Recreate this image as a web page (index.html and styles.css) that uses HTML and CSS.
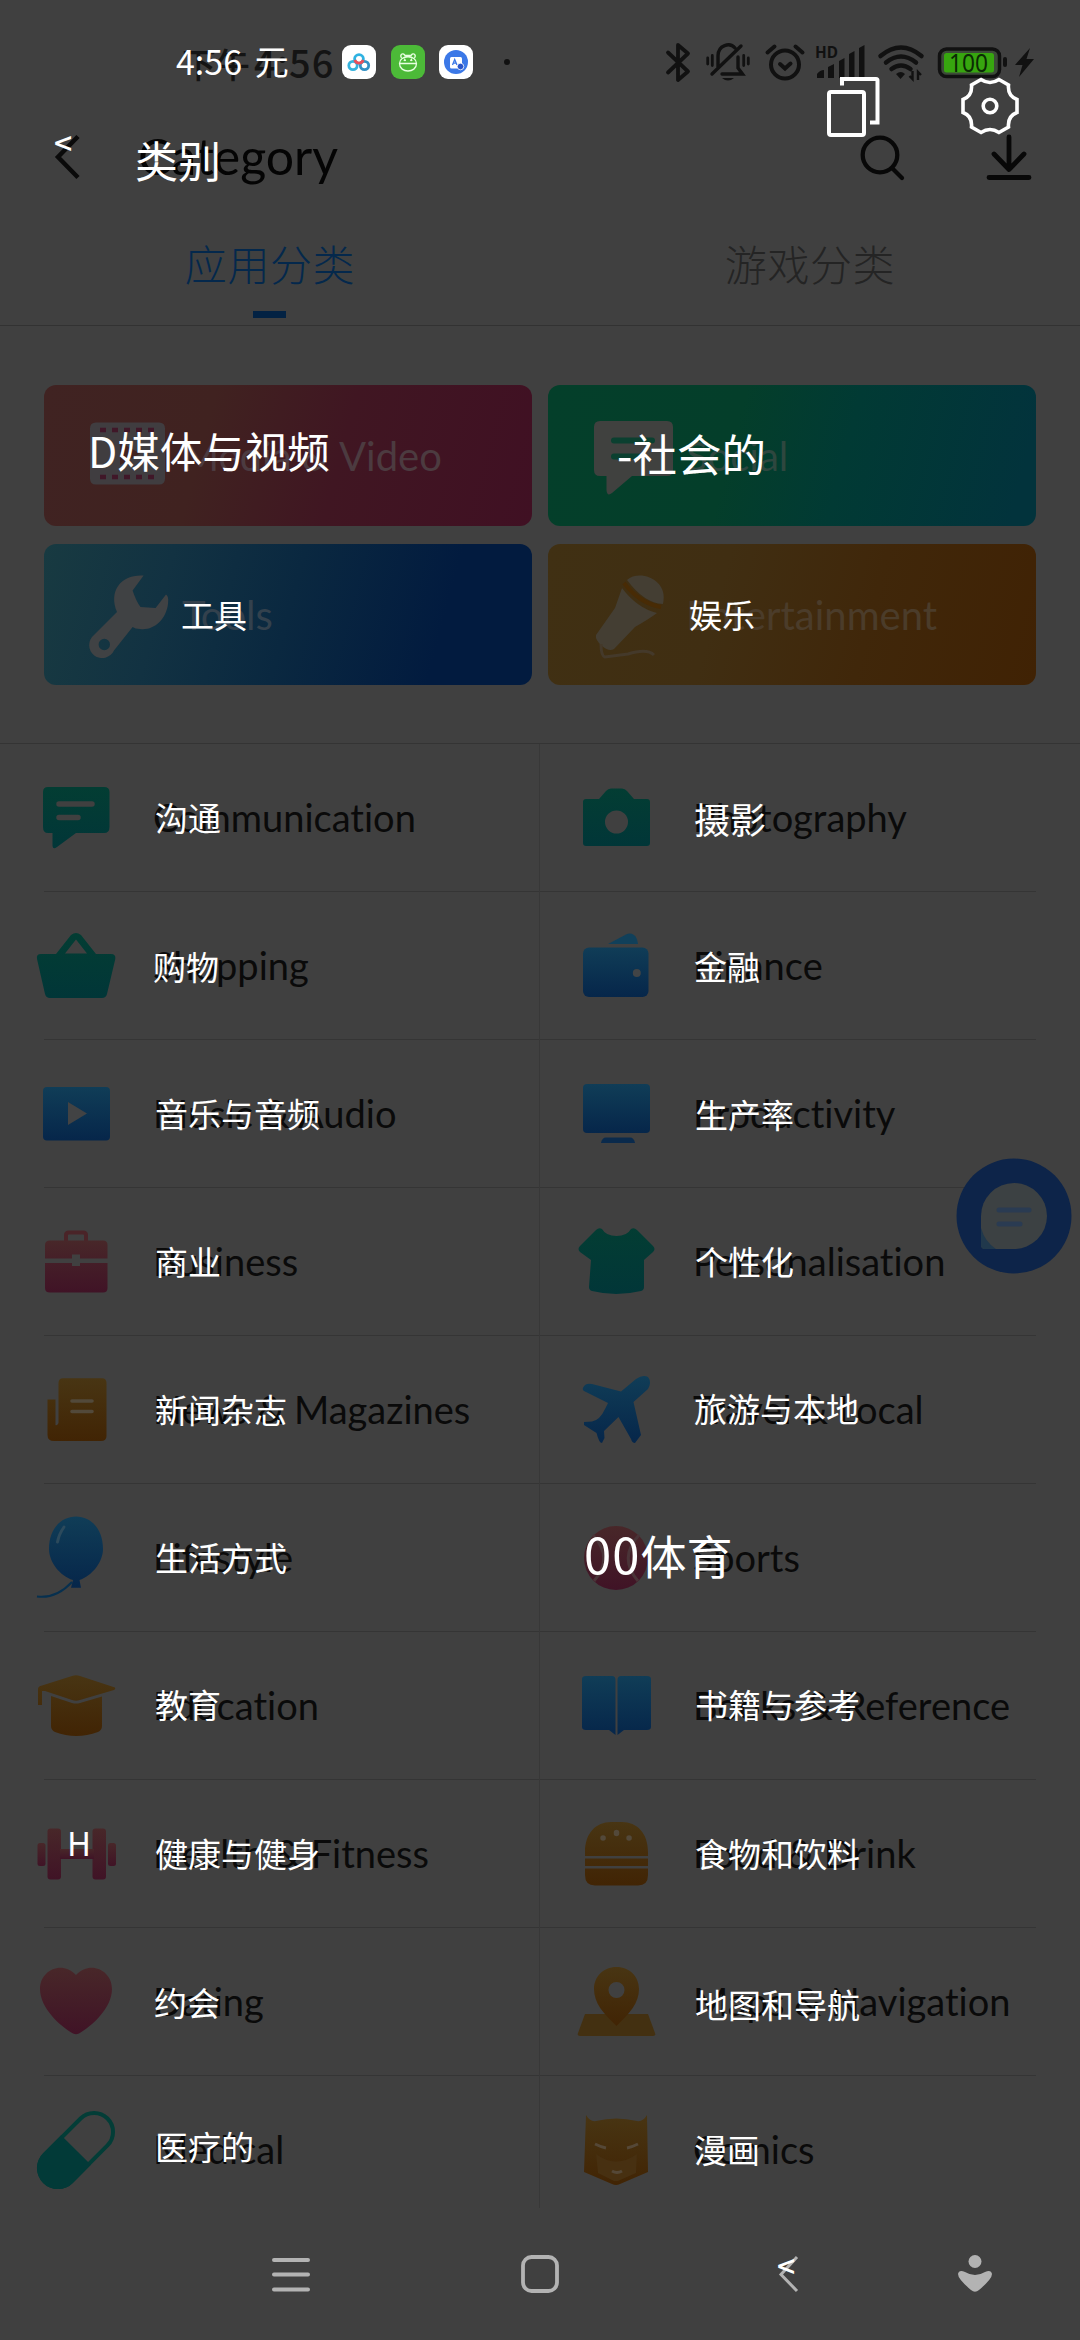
FILE: index.html
```html
<!DOCTYPE html>
<html lang="zh-CN">
<head>
<meta charset="utf-8">
<title>Category</title>
<link rel="stylesheet" href="styles.css">
</head>
<body>
<svg class="defs" width="0" height="0" aria-hidden="true">
  <defs>
    <linearGradient id="teal" x1="0" y1="0" x2="0" y2="1"><stop offset="0" stop-color="#033d33"/><stop offset="1" stop-color="#013638"/></linearGradient>
    <linearGradient id="blue" x1="0" y1="0" x2="0" y2="1"><stop offset="0" stop-color="#103d57"/><stop offset="1" stop-color="#06264a"/></linearGradient>
    <linearGradient id="red" x1="0" y1="0" x2="0" y2="1"><stop offset="0" stop-color="#482729"/><stop offset="1" stop-color="#401326"/></linearGradient>
    <linearGradient id="amber" x1="0" y1="0" x2="0" y2="1"><stop offset="0" stop-color="#483513"/><stop offset="1" stop-color="#412404"/></linearGradient>
  </defs>
</svg>
<div class="screen">
  <header class="status">
    <div class="clock">下午<span class="digits">4:56</span><span class="tr tr-clock">4:56 元</span></div>
    <div class="apps">
      <svg width="34" height="34" viewBox="0 0 34 34"><rect width="34" height="34" rx="9" fill="#fff"/><g fill="none" stroke-width="2.800"><circle cx="11" cy="20.500" r="4.200" stroke="#35b3de"/><circle cx="22.500" cy="20.500" r="4.200" stroke="#3391c4"/><circle cx="17" cy="14" r="4.400" stroke="#2eb2e2"/><path d="M12.800 15a4.400 4.400 0 0 0 8.400 0" stroke="#e8505b"/></g></svg>
      <svg width="34" height="34" viewBox="0 0 34 34"><rect width="34" height="34" rx="9" fill="#4cba38"/><g fill="none" stroke="#e7ffe0" stroke-width="1.300"><path d="M8.500 18.500c0-9 17-9 17 0 0 10-17 10-17 0zM8.500 18.500h17M10.500 13c-2-3 1-6 3.500-2.500h6c2.500-3.500 5.500-.5 3.500 2.500"/><path d="M13 16l.8-1.500.8 1.500M19.500 16l.8-1.500.8 1.500"/></g></svg>
      <svg width="34" height="34" viewBox="0 0 34 34"><rect width="34" height="34" rx="9" fill="#fff"/><circle cx="17" cy="17" r="12" fill="#3b78e7"/><rect x="11" y="12" width="12" height="11.500" rx="1.500" fill="#fff"/><path d="M13.500 20l2.200-5.500L18 20M14.500 18.200h2.600" fill="none" stroke="#3b78e7" stroke-width="1.300"/><circle cx="21.500" cy="21.500" r="3.300" fill="#2a55c8" stroke="#fff" stroke-width=".8"/></svg>
    </div>
    <i class="dot"></i>
    <div class="indicators">
      <svg class="bt" width="24" height="39" viewBox="0 0 24 39"><path d="M2 9.500l20 19L12 37V2l10 8.500-20 19" fill="none" stroke="#111" stroke-width="3.800" stroke-linejoin="round" stroke-linecap="round"/></svg>
      <svg class="bell" width="44" height="38" viewBox="0 0 44 38"><g fill="none" stroke="#111" stroke-width="3.400" stroke-linecap="round"><path d="M12 24V13c0-11 12-14 17-8M32 14v11l4.500 6H16M6 31L35 3"/><path d="M1.700 15v6M6.300 12.500v10M37.700 12.500v10M42.300 15v6" stroke-width="2.800"/></g><path d="M16 35h12q-6 5-12 0z" fill="#111"/></svg>
      <svg class="alarm" width="40" height="37" viewBox="0 0 40 37"><g fill="none" stroke="#111" stroke-width="4" stroke-linecap="round"><circle cx="20" cy="20.500" r="14"/><path d="M15 20l5 4.500 5.500-5M2.500 8.500l7-6M37.500 8.500l-7-6"/></g></svg>
      <svg class="signal" width="50" height="34" viewBox="0 0 50 34"><text x="0" y="12.500" class="hd" textLength="23" lengthAdjust="spacingAndGlyphs">HD</text><path d="M2 33v-4q3-4 7-4v8zM13 33V22l6-3v14zM24 33V16l5.500-3v20zM34 33V9l5.500-3v27zM44 33V3l5.500-3v33z" fill="#111"/></svg>
      <svg class="wifi" width="46" height="35" viewBox="0 0 46 35"><g fill="none" stroke="#111" stroke-width="4.500" stroke-linecap="round"><path d="M2.500 11Q23-6 43.500 11M8 17.500q15-12 30 0M13.500 24q9.500-7 19 0"/></g><path d="M18 29q5-4 9 0l-4.500 5z" fill="#111"/><path d="M34.500 26v8l-3-3M40 35v-8l3 3" fill="none" stroke="#111" stroke-width="2.400"/></svg>
      <svg class="battery" width="70" height="31" viewBox="0 0 70 31"><rect x="1.500" y="2" width="60" height="27.500" rx="7" fill="#3c4a38" stroke="#111" stroke-width="3.500"/><rect x="6" y="6" width="50" height="19.500" rx="2.500" fill="#37a60f"/><rect x="65" y="10" width="4" height="10" rx="2" fill="#111"/><text x="11" y="24.500" class="charge" textLength="39" lengthAdjust="spacingAndGlyphs">100</text></svg>
      <svg class="bolt" width="19" height="29" viewBox="0 0 19 29"><path d="M15 0L0 17h7.500L4 29 19 11h-7.500z" fill="#111"/></svg>
    </div>
  </header>

  <div class="titlebar">
    <svg class="back" width="26" height="46" viewBox="0 0 26 46"><path d="M23 2.500L3 23l20 20.500" fill="none" stroke="#0a0a0a" stroke-width="4.500"/></svg>
    <h1>Category</h1>
    <svg class="search" width="46" height="46" viewBox="0 0 46 46"><g fill="none" stroke="#080808" stroke-width="4.300" stroke-linecap="round"><circle cx="20" cy="21" r="17.300"/><path d="M32.500 34.500L42 44"/></g></svg>
    <svg class="download" width="46" height="46" viewBox="0 0 46 46"><path d="M23 3v32M8 20l15 15.500L38 20M3 43.500h40" fill="none" stroke="#080808" stroke-width="4.800" stroke-linecap="round" stroke-linejoin="round"/></svg>
    <span class="tr tr-back">&lt;</span><span class="tr tr-title">类别</span>
    <svg class="copy" width="52" height="60" viewBox="0 0 52 60"><g fill="none" stroke="#fff" stroke-width="4"><rect x="2" y="15" width="35" height="43" rx="2"/><path d="M15 8.500V2h34a1.500 1.500 0 0 1 1.500 1.500V45.500H43"/></g></svg>
    <svg class="gear" width="58" height="58" viewBox="0 0 58 58"><g fill="none" stroke="#fff" stroke-width="3.600"><circle cx="29" cy="29" r="6.800"/><path d="M20 2.500Q29 8.500 38 2.500L47.500 8Q46.500 19 56 22.500V35.500Q46.500 39 47.500 50L38 55.500Q29 49.500 20 55.500L10.500 50Q11.500 39 2 35.500V22.500Q11.500 19 10.500 8Z"/></g></svg>
  </div>

  <nav class="tabs"><span class="tab active">应用分类</span><span class="tab">游戏分类</span></nav>

  <section class="cards">
    <div class="card media"><svg width="80" height="90" viewBox="0 0 80 90"><path fill-rule="evenodd" fill="#403d40" d="M6 11.500H69Q75 11.500 75 17.500V67.500Q75 73.500 69 73.500H6Q0 73.500 0 67.500V17.500Q0 11.500 6 11.500ZM30 31V54L50 42.500Z"/><path d="M10 19H66M10 66H66" stroke="#401728" stroke-width="4.500" stroke-dasharray="6 6"/></svg><span>Media &amp; Video</span><b class="tr">D媒体与视频</b></div>
    <div class="card social"><svg width="80" height="90" viewBox="0 0 80 90"><path fill="#40413f" d="M6 10H73Q79 10 79 16V59Q79 65 73 65H38L18 82Q13 86 12.500 79V65H6Q0 65 0 59V16Q0 10 6 10Z"/><path d="M20 29.500H58M20 45.500H45" stroke="#0b4030" stroke-width="6" stroke-linecap="round"/></svg><span>Social</span><b class="tr">-社会的</b></div>
    <div class="card tools"><svg width="80" height="90" viewBox="0 0 80 90"><path fill="#404244" fill-rule="evenodd" d="M53.600 5.500L42.600 20.500Q46 31 50.500 37L65.600 38L76 24.500Q79 26 78 34C76 50 63 61 50 59Q45 59 42.600 57L24 80.500A13 13 0 1 1 4 65L27 42C18 20 32 4 53.600 5.500ZM20 74.500a5.700 5.700 0 1 0-11.400 0a5.700 5.700 0 1 0 11.400 0Z"/></svg><span>Tools</span><b class="tr">工具</b></div>
    <div class="card fun"><svg width="80" height="90" viewBox="0 0 80 90"><path fill="#443e33" d="M33 10C45-1 75 9 69 34Q50 33 33 10ZM28 18Q43 38 63 43Q55 49 41 57L20 79Q15 82 8 76Q1 70 2 65L21 38Z"/><path d="M7 74Q7 86 11 87L34 84Q53 78 60 85" fill="none" stroke="#44392a" stroke-width="3"/><path d="M30 13Q45 33 67 37" fill="none" stroke="#482b05" stroke-width="4"/></svg><span>Entertainment</span><b class="tr">娱乐</b></div>
  </section>

  <main class="list">
    <div class="cell"><svg width="80" height="80" viewBox="0 0 80 80"><path fill="url(#teal)" d="M12 10H68Q73.500 10 73.500 15V50Q73.500 56 68 56H40L21 70Q17 73 16.500 69V56H12Q7 56 7 50V15Q7 10 12 10Z"/><path d="M23 27H56M23 40.500H42" stroke="#404040" stroke-width="5.500" stroke-linecap="round"/></svg><span>Communication</span><b class="tr">沟通</b></div>
    <div class="cell"><svg width="80" height="80" viewBox="0 0 80 80"><path fill-rule="evenodd" fill="url(#teal)" d="M10 22H23L30 14Q32 11.500 35 11.500H46Q49 11.500 51 14L58 22H71Q74 22 74 25V66Q74 69 71 69H10Q7 69 7 66V25Q7 22 10 22ZM52 45a11.500 11.500 0 1 0-23 0a11.500 11.500 0 1 0 23 0Z"/></svg><span>Photography</span><b class="tr large">摄影</b></div>
    <div class="cell"><svg width="80" height="80" viewBox="0 0 80 80"><path fill-rule="evenodd" fill="url(#teal)" d="M20 29L35 10Q40 6 45 10L60 29H75Q80 29 79.300 34L71 69Q70 73 66 73H14Q10 73 9 69L1 34Q0 29 5 29ZM29 28.500H51L40 14.500Z"/></svg><span>Shopping</span><b class="tr">购物</b></div>
    <div class="cell"><svg width="80" height="80" viewBox="0 0 80 80"><path d="M32 19L50 9.500Q54 7.500 58 10Q61 12 62 19Z" fill="#11405a"/><rect x="7" y="22.500" width="65.500" height="49.500" rx="6" fill="url(#blue)"/><circle cx="60.800" cy="48" r="4" fill="#424446"/></svg><span>Finance</span><b class="tr">金融</b></div>
    <div class="cell"><svg width="80" height="80" viewBox="0 0 80 80"><rect x="7" y="14" width="67" height="53.500" rx="4" fill="url(#blue)"/><path d="M32 29V52L51 40.500Z" fill="#424344"/></svg><span>Music &amp; Audio</span><b class="tr">音乐与音频</b></div>
    <div class="cell"><svg width="80" height="80" viewBox="0 0 80 80"><rect x="7" y="11" width="67" height="49" rx="4" fill="url(#blue)"/><path d="M25 70q1-5.500 5-5.500h24q4 0 5 5.500z" fill="#0a2a4c"/></svg><span>Productivity</span><b class="tr">生产率</b></div>
    <div class="cell"><svg width="80" height="80" viewBox="0 0 80 80"><path d="M30 21V14Q30 11.500 33 11.500H47Q50 11.500 50 14V21" fill="none" stroke="#4a2428" stroke-width="4"/><path fill="url(#red)" d="M14 19.500H67Q71.500 19.500 71.500 24V37.500H44V33.500H36V37.500H9V24Q9 19.500 14 19.500ZM9 42H36V45H44V42H71.500V67Q71.500 71.500 67 71.500H14Q9 71.500 9 67Z"/></svg><span>Business</span><b class="tr">商业</b></div>
    <div class="cell"><svg width="80" height="80" viewBox="0 0 80 80"><path fill="url(#teal)" d="M20 9Q23 6 26 8Q30 15 40.500 15Q51 15 55 8Q58 6 61 9L77 25Q80 28 77 31L68 39V66Q68 69 65 70Q40 76 16 70Q13 69 13 66L15 39L4 31Q1 28 4 25Z"/></svg><span>Personalisation</span><b class="tr">个性化</b></div>
    <div class="cell"><svg width="80" height="80" viewBox="0 0 80 80"><path fill="url(#amber)" d="M27 9.300H66Q70.500 9.300 70.500 14V67Q70.500 72 65 72H18Q11.500 72 11.500 66V30.500H19.500V56Q21 57 22.500 54V14Q22.500 9.300 27 9.300Z"/><path d="M36 32H56M36 42.500H56" stroke="#52493a" stroke-width="3.600" stroke-linecap="round"/></svg><span>News &amp; Magazines</span><b class="tr">新闻杂志</b></div>
    <div class="cell"><svg width="80" height="80" viewBox="0 0 80 80"><path fill="url(#blue)" d="M45 22.500L60 10Q67 5 72 8Q76 13 72 20L57.500 33L65 66L59 74Q56 74 55 70L42.500 48L28 62L28.500 69L26 74Q23 74 20.500 64Q11 58 8 56L8 53L16 52.500Q24 51 29 40L32 34L8 22Q5 20 9 16Q12 14 16 15Z"/></svg><span>Travel &amp; Local</span><b class="tr">旅游与本地</b></div>
    <div class="cell"><svg width="80" height="80" viewBox="0 0 80 80"><path d="M35 70.700L37 63C24 59 13 45 13 32C13 12 25-.5 40-.5S67 12 67 32C67 45 56 59 43.500 63L45 70.700Z" fill="url(#blue)"/><path d="M36 65Q20 82 1 79.500" fill="none" stroke="#07304f" stroke-width="2"/><path d="M28 10Q23 17 21.500 25" fill="none" stroke="#2c4a5c" stroke-width="3" stroke-linecap="round"/></svg><span>Lifestyle</span><b class="tr">生活方式</b></div>
    <div class="cell"><svg width="80" height="80" viewBox="0 0 80 80"><circle cx="40" cy="41" r="32" fill="url(#red)"/><path d="M17 18Q38 41 18 64M63 18Q42 41 62 64" fill="none" stroke="#4a3438" stroke-width="3"/></svg><span>Sports</span><b class="tr sport"><i>00</i>体育</b></div>
    <div class="cell"><svg width="80" height="80" viewBox="0 0 80 80"><path fill="url(#amber)" d="M2 40V24Q2 21 6 20.500L36 11Q40 9.500 44 11L79 22.500Q80 24 78 25L44 35Q40 36.500 36 35L9 26L6 26V40ZM15 31L36 38Q40 39 44 38L66 31.500V61Q66 65 62 67Q40 75 19 67Q15 65 15 61Z"/></svg><span>Education</span><b class="tr">教育</b></div>
    <div class="cell"><svg width="80" height="80" viewBox="0 0 80 80"><path fill="url(#blue)" d="M10 11H36Q39.500 11 39.500 15V70L33 65H10Q6 65 6 62V14Q6 11 10 11ZM45 11H71Q75 11 75 14V62Q75 65 71 65H48L41.500 70V15Q41.500 11 45 11Z"/></svg><span>Books &amp; Reference</span><b class="tr">书籍与参考</b></div>
    <div class="cell"><svg width="80" height="80" viewBox="0 0 80 80"><g fill="url(#red)"><rect x="11.500" y="15.500" width="13.500" height="51" rx="3"/><rect x="56.500" y="15.500" width="13.500" height="51" rx="3"/><rect x="1.500" y="30" width="8" height="23" rx="2.500"/><rect x="72" y="30" width="8" height="23" rx="2.500"/><rect x="24" y="36" width="34" height="10"/></g></svg><span>Health &amp; Fitness</span><b class="tr">健康与健身</b><b class="tr mark">H</b></div>
    <div class="cell"><svg width="80" height="80" viewBox="0 0 80 80"><path fill="url(#amber)" d="M9 43V39C9 20 20 9 35 9H46C61 9 72 20 72 39V43ZM9 45.500H72V53H9ZM9 55.500H72V62Q72 72.500 62 72.500H19Q9 72.500 9 62Z"/><path d="M27 25h.1M40.500 19.500v1M53 25h.1" stroke="#53493a" stroke-width="5.500" stroke-linecap="round"/></svg><span>Food &amp; Drink</span><b class="tr">食物和饮料</b></div>
    <div class="cell"><svg width="80" height="80" viewBox="0 0 80 80"><path fill="url(#red)" d="M40 14C54-1 76 9 76 28C76 47 56 65 43 72.500Q40 74 37 72.500C24 65 4 47 4 28C4 9 26-1 40 14Z"/></svg><span>Dating</span><b class="tr">约会</b></div>
    <div class="cell"><svg width="80" height="80" viewBox="0 0 80 80"><path d="M9 53H72L79 72Q80 75 77 75H4Q1 75 2 72Z" fill="#433011"/><path fill-rule="evenodd" fill="url(#amber)" d="M40.500 6C27 6 18 16 18 28C18 42 27 52 40.500 65C54 52 63 42 63 28C63 16 54 6 40.500 6ZM48.500 29a8 8 0 1 0-16 0a8 8 0 1 0 16 0Z"/></svg><span>Maps &amp; Navigation</span><b class="tr">地图和导航</b></div>
    <div class="cell last"><svg width="80" height="80" viewBox="0 0 80 80"><g transform="rotate(-45 40 41)"><rect x="-4.500" y="22" width="89" height="38" rx="19" fill="none" stroke="#033d37" stroke-width="4"/><path d="M40 20V62H14.500A21 21 0 0 1 14.500 20Z" fill="#023a38"/></g></svg><span>Medical</span><b class="tr">医疗的</b></div>
    <div class="cell last"><svg width="80" height="80" viewBox="0 0 80 80"><path fill="url(#amber)" d="M10 6Q14 13 20 12Q40 7 61 12Q67 13 71 6L72 63L44 75Q40 77 36 75L8 63Z"/><path d="M20 45Q40 60 61 45L60 64L42 72H38L22 64Z" fill="#473011"/><path d="M19 35q6 3 11 4M62 35q-6 3-11 4M36 62q5 3 10 0" fill="none" stroke="#554837" stroke-width="3"/></svg><span>Comics</span><b class="tr">漫画</b></div>
    <svg class="chat" width="116" height="116" viewBox="0 0 116 116"><circle cx="58" cy="58" r="57.500" fill="#0d2449"/><path d="M58 25a33 33 0 1 1 0 66H29q-4 0-4-4V58A33 33 0 0 1 58 25z" fill="#3c4143"/><path d="M25 70Q29 84 40 91H29q-4 0-4-4z" fill="#20384c"/><path d="M43 52H73M43 66H64" stroke="#2a3b52" stroke-width="5" stroke-linecap="round"/></svg>
  </main>

  <footer class="navbar">
    <svg class="menu" width="38" height="38" viewBox="0 0 38 38"><path d="M2 5h34M2 19.500h34M2 34.500h34" stroke="#b3b3b3" stroke-width="4" stroke-linecap="round"/></svg>
    <svg class="home" width="38" height="38" viewBox="0 0 38 38"><rect x="2" y="2" width="34" height="34" rx="8.500" fill="none" stroke="#b3b3b3" stroke-width="3.800"/></svg>
    <span class="navback"><svg width="20" height="38" viewBox="0 0 20 38"><path d="M18 2L2 19.500 18 36" fill="none" stroke="#b3b3b3" stroke-width="3"/></svg><b class="tr">&lt;</b></span>
    <svg class="person" width="36" height="40" viewBox="0 0 36 40"><circle cx="18" cy="7.500" r="6.500" fill="#b3b3b3"/><path d="M1 20q1-5 7-2 10 6 20 0 6-3 7 2 0 5-13 16-4 3.500-8 0Q1 25 1 20z" fill="#b3b3b3"/></svg>
  </footer>
</div>
</body>
</html>
```
FILE: styles.css
```css
* { box-sizing: border-box; }
body { margin: 0; background: #404040; font-family: Lato, "Noto Sans CJK SC", sans-serif; font-variant-ligatures: none; }
.defs { position: absolute; }
.screen { width: 1080px; height: 2340px; display: flex; flex-direction: column; overflow: hidden; position: relative; }
svg { display: block; flex: none; overflow: visible; }

/* translated captions floating over the original labels */
.tr { position: absolute; color: #fff; font: 400 33px/1 "Noto Sans CJK SC", sans-serif; white-space: nowrap; z-index: 2; }

.status { height: 124px; display: flex; align-items: center; padding: 0 46px 0 182px; position: relative; }
.clock { font: 500 34px/1 "Noto Sans CJK SC", sans-serif; color: #141414; width: 160px; position: relative; white-space: nowrap; }
.digits { font-size: 38px; margin-left: 4px; letter-spacing: 1px; }
.tr-clock { left: -6px; top: 1px; font-size: 34px; word-spacing: 5px; }
.apps { display: flex; gap: 14.500px; }
.dot { width: 6px; height: 6px; border-radius: 50%; background: #111; margin-left: 31px; }
.indicators { display: flex; align-items: center; margin-left: auto; }
.bell { margin-left: 16px; }
.alarm { margin-left: 15px; }
.signal { margin-left: 10px; }
.wifi { margin-left: 13px; }
.battery { margin-left: 14px; }
.bolt { margin-left: 7px; }
.hd { font: 700 16px "Noto Sans", sans-serif; fill: #111; }
.charge { font: 400 26px "Noto Sans", sans-serif; fill: #0b2a04; }

.titlebar { height: 68px; display: flex; align-items: center; padding: 0 48px 2px 55px; position: relative; }
h1 { margin: -2px 0 0 57px; font-weight: 400; font-size: 50px; line-height: 1; color: #040404; }
.search { margin-left: auto; }
.download { margin-left: 80px; }
.tr-back { left: 54px; top: 1px; font-size: 32px; font-weight: 500; }
.tr-title { left: 135px; top: 14px; font-size: 43px; }
.copy { position: absolute; left: 827px; top: -47px; }
.gear { position: absolute; left: 961px; top: -47px; }

.tabs { height: 134px; display: grid; grid-template-columns: 1fr 1fr; border-bottom: 1px solid #323232; }
.tab { text-align: center; font: 300 42px/142px "Noto Sans CJK SC", sans-serif; letter-spacing: .6px; color: #242424; height: 133px; position: relative; }
.active { color: #04284c; }
.active::after { content: ""; position: absolute; left: 253px; bottom: 7px; width: 33px; height: 7px; background: #032243; }

.cards { padding: 59px 44px 58px; display: grid; grid-template-columns: 1fr 1fr; grid-auto-rows: 141px; gap: 18px 16px; }
.card { border-radius: 12px; display: flex; align-items: center; gap: 12px; padding-left: 46px; position: relative; font-size: 40px; }
.card .tr { top: 54px; }
.media { background: linear-gradient(105deg, #402322 0%, #402220 33%, #401622 60%, #401023 100%); color: #4c3b40; }
.social { background: linear-gradient(105deg, #043f2a 0%, #043e2a 38%, #013a34 60%, #02333c 95%); color: #2e473f; }
.tools { background: linear-gradient(105deg, #183a41 0%, #123242 25%, #0a2840 50%, #021b3f 80%); color: #33414d; }
.fun { background: linear-gradient(105deg, #403013 0%, #402e12 35%, #40270a 65%, #402204 100%); color: #4b3c2a; }
.media .tr { left: 44px; top: 44px; font-size: 42.500px; }
.social .tr { left: 69px; top: 46px; font-size: 44.500px; }
.tools .tr { left: 137px; }
.fun .tr { left: 141px; }

.list { height: 1464px; display: grid; grid-template-columns: 1fr 1fr; grid-auto-rows: 148px; position: relative; border-top: 1px solid #343434; }
.list::after { content: ""; position: absolute; left: 539px; top: 0; width: 1px; height: 1464px; background: #383838; }
.cell { display: flex; align-items: center; gap: 37px; padding: 0 0 2px 36px; position: relative; font-size: 38px; color: #0a0a0a; }
.cell::after { content: ""; position: absolute; left: 44px; right: 0; bottom: 0; height: 1px; background: #353535; }
.cell:nth-child(even)::after { left: 0; right: 44px; }
.last::after { display: none; }
.cell .tr { left: 155px; top: 57px; }
.cell:nth-child(3) .tr { left: 153px; top: 58px; }
.cell:nth-child(6) .tr, .cell:nth-child(4) .tr { top: 58px; }
.cell:nth-child(13) .tr, .cell:nth-child(14) .tr, .cell:nth-child(10) .tr { top: 56px; }
.cell:nth-child(17) .tr { left: 154px; top: 58px; }
.cell:nth-child(18) .tr { top: 60px; }
.cell:nth-child(19) .tr { top: 54px; }
.cell:nth-child(4) .tr, .cell:nth-child(10) .tr, .cell:nth-child(20) .tr { left: 154px; }
.cell .tr.large { font-size: 36px; left: 154px; top: 56px; }
.cell .tr.sport { left: 44px; top: 44px; font-size: 46px; }
.sport i { font-style: normal; letter-spacing: 1px; font-size: 49px; }
.cell .tr.mark { left: 67px; top: 46px; }
.chat { position: absolute; left: 956px; top: 414px; z-index: 1; }

.navbar { height: 133px; display: flex; align-items: center; padding-left: 272px; }
.home { margin-left: 211px; }
.navback { position: relative; margin-left: 220px; }
.navback .tr { left: -2px; top: -7px; font-size: 32px; font-weight: 500; }
.person { margin-left: 158px; }
```
